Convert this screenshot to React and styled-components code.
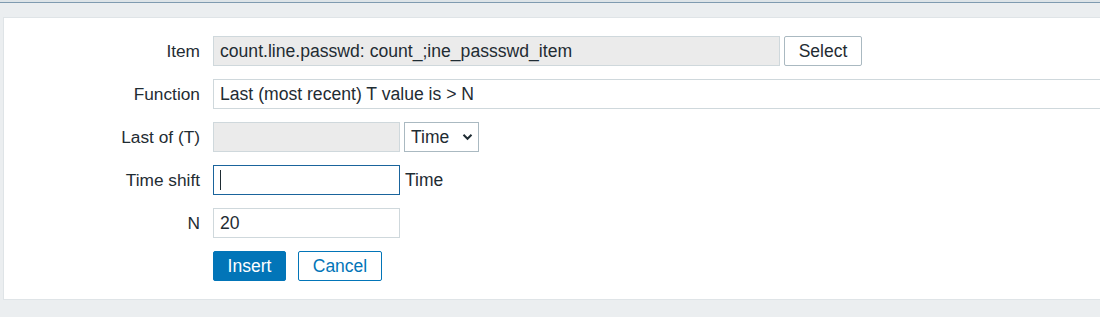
import React from "react";
import styled, { createGlobalStyle } from "styled-components";

const Global = createGlobalStyle`
  html, body {
    margin: 0;
    padding: 0;
    overflow: hidden;
    background: #ebeef0;
    font-family: "Liberation Sans", Arial, sans-serif;
    color: #1f2c33;
  }
`;

const TopLine = styled.div`
  height: 2px;
  background: #dde4e8;
  border-bottom: 1px solid #7f9bb0;
`;

const Page = styled.div`
  padding: 14px 0 0 3px;
  height: 314px;
  box-sizing: border-box;
  overflow: hidden;
`;

const Panel = styled.div`
  width: calc(100% + 40px);
  height: 283px;
  box-sizing: border-box;
  background: #fff;
  border: 1px solid #dfe4e7;
  padding: 18px 0 0 0;
  overflow: hidden;
`;

const Grid = styled.div`
  display: grid;
  grid-template-columns: 196px 1fr;
  column-gap: 13px;
  row-gap: 13px;
  align-items: center;
`;

const Label = styled.label`
  text-align: right;
  font-size: 17.3px;
  line-height: 30px;
`;

const Field = styled.div`
  display: flex;
  align-items: center;
  gap: ${(p) => p.$gap || 4}px;
  position: relative;
  min-width: 0;
`;

const Input = styled.input`
  box-sizing: border-box;
  width: ${(p) => (p.$w ? `${p.$w}px` : "100%")};
  height: 30px;
  padding: 0 6px;
  font: 17.6px "Liberation Sans", Arial, sans-serif;
  color: #1f2c33;
  background: ${(p) => (p.readOnly && !p.$plain ? "#ebebeb" : "#fff")};
  border: 1px solid ${(p) => (p.$focus ? "#1a649c" : "#cfd8dc")};
  outline: none;
  border-radius: 0;
`;

const Caret = styled.span`
  position: absolute;
  left: 7px;
  top: 5px;
  width: 1px;
  height: 20px;
  background: #1f2c33;
`;

const Btn = styled.button`
  box-sizing: border-box;
  height: 30px;
  width: ${(p) => p.$w}px;
  padding: 0;
  font: 17.5px "Liberation Sans", Arial, sans-serif;
  border-radius: 2px;
  cursor: pointer;
  background: ${(p) => (p.$primary ? "#0275b8" : "#fff")};
  color: ${(p) => (p.$primary ? "#fff" : p.$blue ? "#0275b8" : "#1f2c33")};
  border: 1px solid
    ${(p) => (p.$primary || p.$blue ? "#0275b8" : "#aab9c1")};
`;

const SelectBox = styled.div`
  box-sizing: border-box;
  width: 75px;
  height: 30px;
  border: 1px solid #aab9c1;
  display: flex;
  align-items: center;
  justify-content: space-between;
  padding: 0 5px 0 6px;
  font-size: 17.5px;
  background: #fff;
`;

const Text = styled.span`
  font-size: 17.5px;
`;

const Actions = styled.div`
  display: flex;
  gap: 12px;
`;

const Chevron = () => (
  <svg width="11" height="8" viewBox="0 0 11 8">
    <path
      d="M1.5 1.8 L5.5 5.8 L9.5 1.8"
      fill="none"
      stroke="#1f2c33"
      strokeWidth="2"
    />
  </svg>
);

export default function App() {
  return (
    <>
      <Global />
      <TopLine />
      <Page>
        <Panel>
          <Grid>
            <Label>Item</Label>
            <Field>
              <Input
                $w={567}
                readOnly
                value="count.line.passwd: count_;ine_passswd_item"
              />
              <Btn $w={78}>Select</Btn>
            </Field>

            <Label>Function</Label>
            <Field>
              <Input readOnly $plain value="Last (most recent) T value is > N" />
            </Field>

            <Label>Last of (T)</Label>
            <Field>
              <Input $w={187} readOnly value="" />
              <SelectBox>
                <span>Time</span>
                <Chevron />
              </SelectBox>
            </Field>

            <Label>Time shift</Label>
            <Field $gap={5}>
              <Input $w={187} $focus readOnly $plain value="" />
              <Caret />
              <Text>Time</Text>
            </Field>

            <Label>N</Label>
            <Field>
              <Input $w={187} readOnly $plain value="20" />
            </Field>

            <span />
            <Actions>
              <Btn $w={73} $primary>
                Insert
              </Btn>
              <Btn $w={84} $blue>
                Cancel
              </Btn>
            </Actions>
          </Grid>
        </Panel>
      </Page>
    </>
  );
}
